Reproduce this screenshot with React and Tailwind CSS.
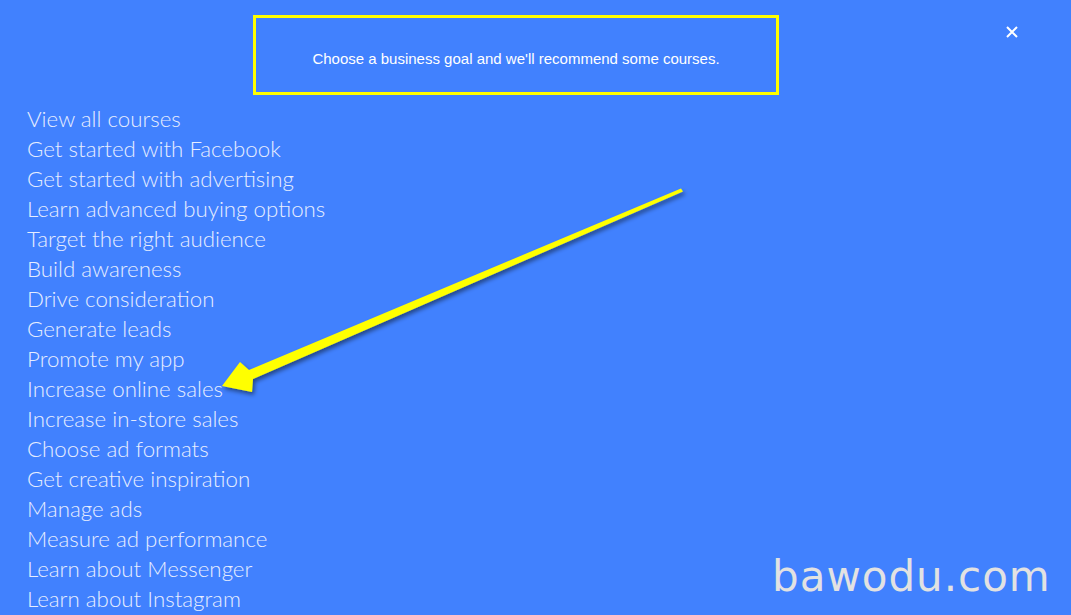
import React from 'react';

const courses = [
  'View all courses',
  'Get started with Facebook',
  'Get started with advertising',
  'Learn advanced buying options',
  'Target the right audience',
  'Build awareness',
  'Drive consideration',
  'Generate leads',
  'Promote my app',
  'Increase online sales',
  'Increase in-store sales',
  'Choose ad formats',
  'Get creative inspiration',
  'Manage ads',
  'Measure ad performance',
  'Learn about Messenger',
  'Learn about Instagram',
];

const Arrow = () => (
  <svg className="absolute left-0 top-0 pointer-events-none" width="1071" height="615">
    <defs>
      <filter id="shadow" x="-10%" y="-10%" width="120%" height="130%">
        <feDropShadow dx="2" dy="3" stdDeviation="2" floodColor="#000" floodOpacity="0.45" />
      </filter>
    </defs>
    <polygon
      points="222,386 240,362 249,370 681,188.5 683,191.5 253,379 252,392"
      fill="#ffff00"
      filter="url(#shadow)"
    />
  </svg>
);

const App = () => {
  return (
    <div className="relative w-[1071px] h-[615px] overflow-hidden bg-[#4181fe]">
      {/* header */}
      <div className="flex items-start pt-[15px]">
        <div className="ml-[253px] w-[526px] h-[80px] border-[3px] border-[#ffff00] flex items-center justify-center">
          <p className="text-white text-[15px] font-['Liberation_Sans',Arial,sans-serif] pt-[9px]">
            Choose a business goal and we'll recommend some courses.
          </p>
        </div>
        <button className="ml-[227px] mt-[11px] w-[12px] h-[12px] text-white">
          <svg viewBox="0 0 12 12" width="12" height="12">
            <path d="M1 1L11 11M11 1L1 11" stroke="#fff" strokeWidth="2" />
          </svg>
        </button>
      </div>

      {/* list */}
      <ul className="mt-[9px] pl-[27px] font-['Lato','Open_Sans',sans-serif] font-light text-[22.3px] leading-[30px] text-[#e6edff]">
        {courses.map((c) => (
          <li key={c}>{c}</li>
        ))}
      </ul>

      <Arrow />

      <div className="absolute left-[772px] top-[556px] text-[42px] tracking-[1px] text-[#e2e2e2] font-['DejaVu_Sans',sans-serif] leading-none">
        bawodu.com
      </div>
    </div>
  );
};

export default App;
